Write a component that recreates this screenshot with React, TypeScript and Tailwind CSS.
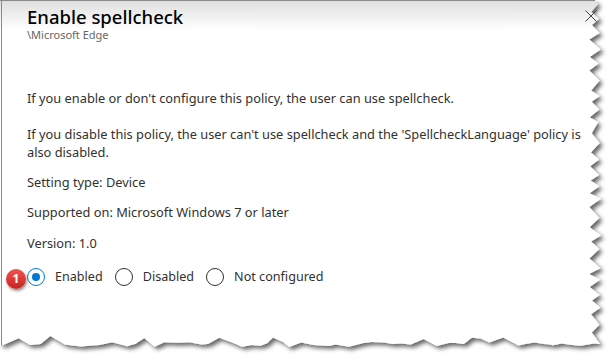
import React from 'react'

// deterministic noise so the torn edge looks the same every render
function rng(seed: number) {
  let s = seed
  return () => {
    s = (s * 16807) % 2147483647
    return (s - 1) / 2147483646
  }
}

function tornPath() {
  const r = rng(42)
  const pts: [number, number][] = [
    [0, 0],
    [594, 0],
  ]
  // right edge, going down
  let y = 4
  let out = true
  while (y < 340) {
    const x = out ? 598 + r() * 3 : 589 + r() * 3
    pts.push([x, y])
    y += 5 + r() * 6
    out = !out
  }
  pts.push([600, 344])
  // bottom edge, going left
  let x = 594
  while (x > 4) {
    const spike = r() < 0.18
    const yy = spike ? 336 + r() * 3 : 342 + r() * 5
    pts.push([x, yy])
    x -= 4 + r() * 12
  }
  pts.push([0, 345])
  return pts.map(([a, b]) => `${a.toFixed(1)},${b.toFixed(1)}`).join(' ')
}

const points = tornPath()

function Radio({ label, checked }: { label: string; checked?: boolean }) {
  return (
    <label className="flex items-center gap-[10px] cursor-pointer">
      <span
        className={
          checked
            ? 'flex h-[18px] w-[18px] items-center justify-center rounded-full border border-[#0078d4] bg-white'
            : 'flex h-[18px] w-[18px] items-center justify-center rounded-full border border-[#323130] bg-white'
        }
      >
        {checked && <span className="h-[8px] w-[8px] rounded-full bg-[#0078d4]" />}
      </span>
      <span className="text-[12.6px] leading-[20px] text-[#323130]">{label}</span>
    </label>
  )
}

export default function App() {
  return (
    <div
      className="relative h-[363px] w-[615px] overflow-hidden bg-white"
      style={{ fontFamily: '"Noto Sans", "Open Sans", sans-serif' }}
    >
      {/* torn paper background */}
      <svg className="absolute inset-0" width="615" height="363" viewBox="0 0 615 363">
        <defs>
          <linearGradient id="top" x1="0" y1="0" x2="0" y2="30" gradientUnits="userSpaceOnUse">
            <stop offset="0" stopColor="#dedede" />
            <stop offset="1" stopColor="#ffffff" />
          </linearGradient>
          <filter id="shadow" x="-5%" y="-5%" width="115%" height="115%">
            <feDropShadow dx="3" dy="3" stdDeviation="2.2" floodColor="#000" floodOpacity="0.6" />
          </filter>
        </defs>
        <polygon points={points} fill="url(#top)" filter="url(#shadow)" />
        <line x1="0" y1="0.5" x2="595" y2="0.5" stroke="#8a8a8a" />
        <line x1="1.5" y1="0" x2="1.5" y2="345" stroke="#8a8a8a" />
      </svg>

      {/* close */}
      <svg
        className="absolute left-[585px] top-[10px]"
        width="12"
        height="12"
        viewBox="0 0 12 12"
        fill="none"
        stroke="#444"
        strokeWidth="1"
      >
        <path d="M0.5 0.5 L11.5 11.5 M11.5 0.5 L0.5 11.5" />
      </svg>

      <div className="relative pl-[27px] pt-[6px]">
        <h1 className="text-[18.5px] font-medium leading-[22px] text-black">Enable spellcheck</h1>
        <div className="mt-[1px] text-[11px] leading-[12px] text-[#666]">\Microsoft Edge</div>

        <div className="mt-[48px] text-[12.8px] leading-[18px] text-[#323130]">
          <p className="mb-[18px]">If you enable or don't configure this policy, the user can use spellcheck.</p>
          <p className="mb-[12px]">
            If you disable this policy, the user can't use spellcheck and the 'SpellcheckLanguage' policy is
            <br />
            also disabled.
          </p>
          <p className="mb-[12px]">Setting type: Device</p>
          <p className="mb-[13px]">Supported on: Microsoft Windows 7 or later</p>
          <p>Version: 1.0</p>
        </div>

        <div className="relative mt-[15px] flex items-center gap-[12px]">
          <Radio label="Enabled" checked />
          <Radio label="Disabled" />
          <Radio label="Not configured" />
        </div>
      </div>

      {/* step badge */}
      <div className="absolute left-[6px] top-[269px] flex h-[20px] w-[20px] items-center justify-center rounded-full bg-gradient-to-b from-[#f0524f] to-[#c8201c] text-[12px] font-bold leading-none text-white shadow-[1px_2px_3px_rgba(0,0,0,0.45)]">
        1
      </div>
    </div>
  )
}
